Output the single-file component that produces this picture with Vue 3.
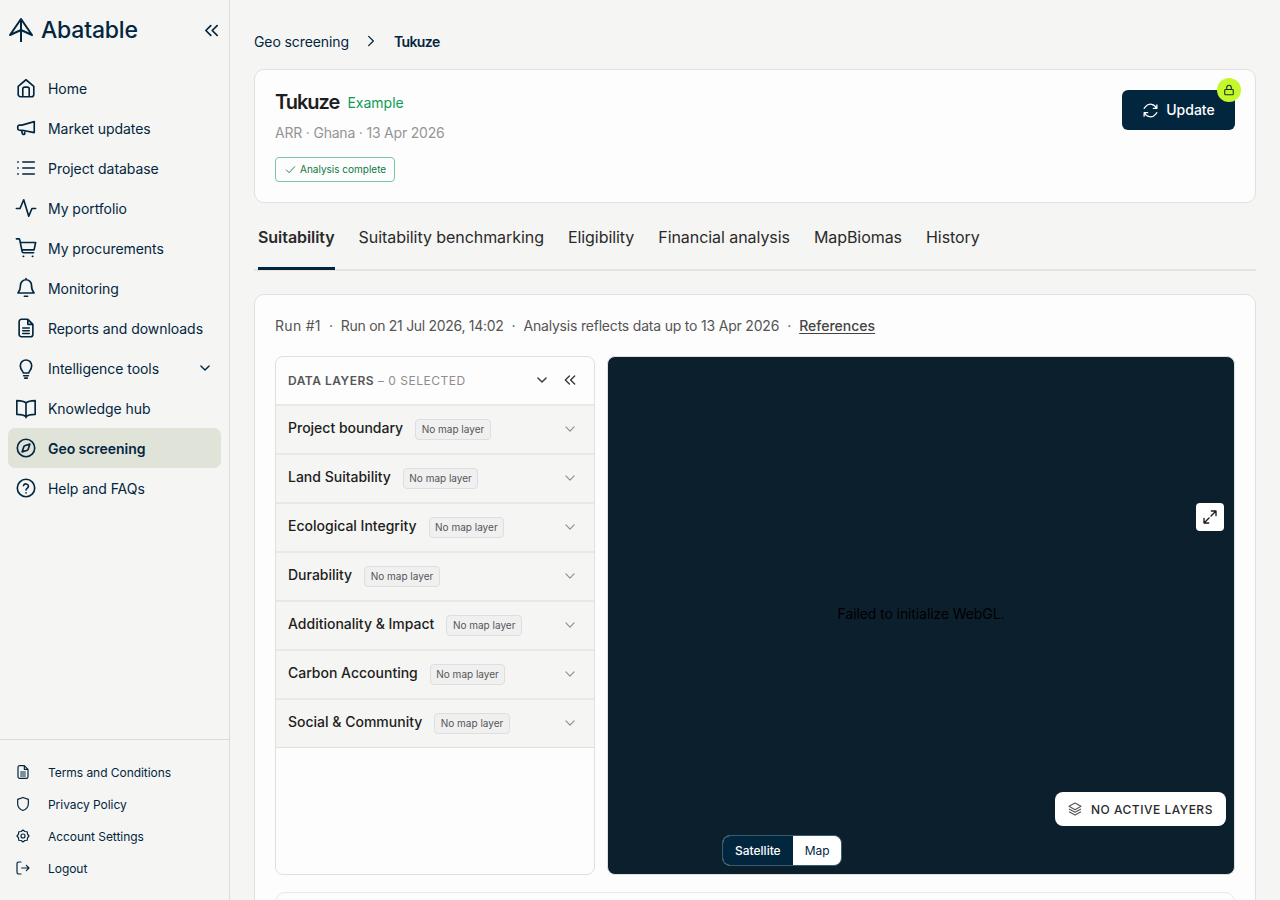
<script setup>
const navItems = [
  { label: 'Home', icon: 'home' },
  { label: 'Market updates', icon: 'megaphone' },
  { label: 'Project database', icon: 'list' },
  { label: 'My portfolio', icon: 'pulse' },
  { label: 'My procurements', icon: 'cart' },
  { label: 'Monitoring', icon: 'bell' },
  { label: 'Reports and downloads', icon: 'file' },
  { label: 'Intelligence tools', icon: 'bulb', caret: true },
  { label: 'Knowledge hub', icon: 'book' },
  { label: 'Geo screening', icon: 'compass', active: true },
  { label: 'Help and FAQs', icon: 'help' },
]

const footerItems = [
  { label: 'Terms and Conditions', icon: 'file' },
  { label: 'Privacy Policy', icon: 'shield' },
  { label: 'Account Settings', icon: 'gear' },
  { label: 'Logout', icon: 'logout' },
]

const icons = {
  home: 'M3.5 10.2 12 3l8.5 7.2V19a2.5 2.5 0 0 1-2.5 2.5H6A2.5 2.5 0 0 1 3.5 19ZM8.5 21.5V13a2 2 0 0 1 2-2h3a2 2 0 0 1 2 2v8.5',
  megaphone: 'M21 5v12L8 14.5H5a2 2 0 0 1-2-2v-1.6a2 2 0 0 1 2-2h2.5ZM7 14.5l1 3.5a1.4 1.4 0 0 0 2.7-.8l-.4-2',
  list: 'M8.5 5.5H21M8.5 12H21M8.5 18.5H21M3 5.5h.5M3 12h.5M3 18.5h.5',
  pulse: 'M1.5 12.5h4L9.5 3l5.5 18 3.5-8.5h4',
  cart: 'M1.5 2h2.6a1 1 0 0 1 1 .8L7.8 16a1.5 1.5 0 0 0 1.5 1.2h11M5.7 6h16.8l-1.7 8H7.3M9 21.2h.4M19 21.2h.4',
  bell: 'M6 9a6 6 0 0 1 12 0c0 5 1.5 7 2.8 8.5H3.2C4.5 16 6 14 6 9ZM10.2 21h3.6M12 3V1.8',
  file: 'M14 2.5H7A2.5 2.5 0 0 0 4.5 5v14A2.5 2.5 0 0 0 7 21.5h10a2.5 2.5 0 0 0 2.5-2.5V8ZM14 2.5V8h5.5M8.5 12h7M8.5 15h7M8.5 18h7',
  bulb: 'M9 17.5c0-2-3.2-3.5-3.2-8a6.2 6.2 0 0 1 12.4 0c0 4.5-3.2 6-3.2 8ZM9.5 20.5h5M10.5 23h3',
  book: 'M12 6.5C10 4.5 6.5 4 2 4v15c4.5 0 8 .5 10 2.5 2-2 5.5-2.5 10-2.5V4c-4.5 0-8 .5-10 2.5ZM12 6.5v16',
  compass: 'M12 2.5a9.5 9.5 0 1 0 0 19 9.5 9.5 0 0 0 0-19ZM16.2 7.8l-1.9 5.7a1.5 1.5 0 0 1-.9.9l-5.6 1.8 1.9-5.7a1.5 1.5 0 0 1 .9-.9Z',
  help: 'M12 2.5a9.5 9.5 0 1 0 0 19 9.5 9.5 0 0 0 0-19ZM9.3 9.3a2.8 2.8 0 0 1 5.400.9c0 1.900-2.700 2.400-2.700 4M12 17.300v.2',
  shield: 'M12 2.200 20 5v6.500c0 5-3.500 8.500-8 10.300-4.500-1.800-8-5.300-8-10.300V5Z',
  gear: 'M12 3l2.800 2.260 3.560.38.380 3.560L21 12l-2.260 2.800-.38 3.560-3.560.38L12 21l-2.800-2.260-3.560-.38-.38-3.560L3 12l2.260-2.800.38-3.560 3.560-.38ZM12 9a3 3 0 1 0 0 6 3 3 0 0 0 0-6Z',
  logout: 'M9 3H5.500A2.500 2.500 0 0 0 3 5.500v13A2.500 2.500 0 0 0 5.500 21H9M10 12h11M17 8l4 4-4 4',
}

const layers = [
  'Project boundary',
  'Land Suitability',
  'Ecological Integrity',
  'Durability',
  'Additionality & Impact',
  'Carbon Accounting',
  'Social & Community',
]

const tabs = ['Suitability', 'Suitability benchmarking', 'Eligibility', 'Financial analysis', 'MapBiomas', 'History']
</script>

<template>
  <div class="page">
    <aside class="sidebar">
      <div class="brand">
        <svg class="logo" viewBox="0 0 24 24" width="24" height="24" fill="none" stroke="currentColor" stroke-width="2" stroke-linejoin="round">
          <path d="M12 1 1 17l11-5 11 5ZM12 1v23" />
        </svg>
        <span class="brand-name">Abatable</span>
        <svg class="collapse" viewBox="0 0 24 24" width="17" height="17" fill="none" stroke="currentColor" stroke-width="2.400" stroke-linecap="round" stroke-linejoin="round">
          <path d="M11 5 4 12l7 7M20 5l-7 7 7 7" />
        </svg>
      </div>

      <nav class="nav">
        <a v-for="item in navItems" :key="item.label" class="nav-item" :class="{ active: item.active }">
          <svg class="nav-icon" viewBox="0 0 24 24" width="22" height="22" fill="none" stroke="currentColor" stroke-width="1.800" stroke-linecap="round" stroke-linejoin="round">
            <path :d="icons[item.icon]" />
          </svg>
          <span>{{ item.label }}</span>
          <svg v-if="item.caret" class="caret" viewBox="0 0 24 24" width="14" height="14" fill="none" stroke="currentColor" stroke-width="2.400" stroke-linecap="round" stroke-linejoin="round">
            <path d="m5 8.500 7 7 7-7" />
          </svg>
        </a>
      </nav>

      <div class="side-footer">
        <a v-for="item in footerItems" :key="item.label" class="foot-item">
          <svg viewBox="0 0 24 24" width="16" height="16" fill="none" stroke="currentColor" stroke-width="1.800" stroke-linecap="round" stroke-linejoin="round">
            <path :d="icons[item.icon]" />
          </svg>
          <span>{{ item.label }}</span>
        </a>
      </div>
    </aside>

    <main class="main">
      <div class="crumbs">
        <span>Geo screening</span>
        <svg viewBox="0 0 24 24" width="14" height="14" fill="none" stroke="currentColor" stroke-width="2.200" stroke-linecap="round" stroke-linejoin="round">
          <path d="m8 4 8 8-8 8" />
        </svg>
        <strong>Tukuze</strong>
      </div>

      <section class="card head-card">
        <div>
          <div class="title-row">
            <h1>Tukuze</h1>
            <span class="example">Example</span>
          </div>
          <div class="meta">ARR · Ghana · 13 Apr 2026</div>
          <div class="status">
            <svg viewBox="0 0 24 24" width="11" height="11" fill="none" stroke="currentColor" stroke-width="2" stroke-linecap="round" stroke-linejoin="round">
              <path d="m3 13 6 6L21 6" />
            </svg>
            Analysis complete
          </div>
        </div>
        <button class="update" type="button">
          <svg viewBox="0 0 24 24" width="17" height="17" fill="none" stroke="currentColor" stroke-width="1.800" stroke-linecap="round" stroke-linejoin="round">
            <path d="M21 4v5h-5M3 20v-5h5M20.500 9A9 9 0 0 0 5 6.500L3 9M3.500 15A9 9 0 0 0 19 17.500l2-2.500" />
          </svg>
          <span class="update-label">Update</span>
          <span class="lock">
            <svg viewBox="0 0 24 24" width="12" height="12" fill="none" stroke="#17321f" stroke-width="2.200" stroke-linecap="round" stroke-linejoin="round">
              <path d="M5 11h14a1.500 1.500 0 0 1 1.500 1.500V20a1.500 1.500 0 0 1-1.500 1.500H5A1.500 1.500 0 0 1 3.500 20v-7.500A1.500 1.500 0 0 1 5 11ZM7.500 11V7a4.500 4.500 0 0 1 9 0v4" />
            </svg>
          </span>
        </button>
      </section>

      <div class="tabs">
        <span v-for="(tab, i) in tabs" :key="tab" class="tab" :class="{ current: i === 0 }">{{ tab }}</span>
      </div>

      <section class="card body-card">
        <div class="run-line">
          <span class="run-id">Run #1</span><i>·</i>
          <span class="run-date">Run on 21 Jul 2026, 14:02</span><i>·</i>
          <span>Analysis reflects data up to 13 Apr 2026</span><i>·</i>
          <a>References</a>
        </div>

        <div class="workspace">
          <div class="layers">
            <div class="layers-head">
              <span class="layers-title"><b>DATA LAYERS</b> – 0 SELECTED</span>
              <svg class="head-icon" viewBox="0 0 24 24" width="14" height="14" fill="none" stroke="currentColor" stroke-width="2.400" stroke-linecap="round" stroke-linejoin="round">
                <path d="m5 8.500 7 7 7-7" />
              </svg>
              <svg class="head-icon" viewBox="0 0 24 24" width="14" height="14" fill="none" stroke="currentColor" stroke-width="2.400" stroke-linecap="round" stroke-linejoin="round">
                <path d="M11 5 4 12l7 7M20 5l-7 7 7 7" />
              </svg>
            </div>
            <div v-for="layer in layers" :key="layer" class="layer-row">
              <span class="layer-name">{{ layer }}</span>
              <span class="chip">No map layer</span>
              <svg class="row-caret" viewBox="0 0 24 24" width="14" height="14" fill="none" stroke="currentColor" stroke-width="2" stroke-linecap="round" stroke-linejoin="round">
                <path d="m5 8.500 7 7 7-7" />
              </svg>
            </div>
          </div>

          <div class="map">
            <span class="webgl">Failed to initialize WebGL.</span>
            <button class="expand" type="button">
              <svg viewBox="0 0 24 24" width="16" height="16" fill="none" stroke="#1d1d1d" stroke-width="2" stroke-linecap="round" stroke-linejoin="round">
                <path d="M14 3h7v7M21 3l-7.500 7.500M10 21H3v-7M3 21l7.500-7.500" />
              </svg>
            </button>
            <div class="active-layers">
              <svg viewBox="0 0 24 24" width="16" height="16" fill="none" stroke="#555" stroke-width="1.600" stroke-linejoin="round">
                <path d="m12 3 9 5-9 5-9-5ZM3 12l9 5 9-5M3 16l9 5 9-5" />
              </svg>
              NO ACTIVE LAYERS
            </div>
            <div class="switcher">
              <span class="on">Satellite</span>
              <span class="off">Map</span>
            </div>
          </div>
        </div>

        <div class="next-card"></div>
      </section>
    </main>
  </div>
</template>

<style>
html,
body {
  height: 100%;
  margin: 0;
  overflow: hidden;
}
</style>

<style scoped>
.page {
  display: flex;
  width: 1280px;
  height: 900px;
  overflow: hidden;
  background: #f5f5f3;
  color: #03263f;
  font-family: Inter, "Liberation Sans", sans-serif;
  font-size: 14px;
}

.sidebar {
  flex: 0 0 230px;
  box-sizing: border-box;
  display: flex;
  flex-direction: column;
  border-right: 1px solid #dcdcda;
}

.brand {
  display: flex;
  align-items: center;
  height: 60px;
  padding: 0 9px 0 9px;
}

.logo {
  width: 24px;
  height: 24px;
}

.brand-name {
  margin-left: 8px;
  padding-bottom: 1px;
  font-size: 23px;
  font-weight: 500;
  letter-spacing: -0.2px;
}

.collapse {
  margin-left: auto;
}

.nav {
  display: flex;
  flex-direction: column;
  padding: 8px 8px 0;
}

.nav-item {
  display: flex;
  align-items: center;
  height: 40px;
  padding: 0 7px;
  border-radius: 7px;
  letter-spacing: -0.05px;
}

.nav-icon {
  flex: none;
  margin-right: 11px;
}

.nav-item.active {
  background: #e0e3d8;
  font-weight: 600;
}

.caret {
  margin-left: auto;
  margin-right: 2px;
}

.side-footer {
  margin-top: auto;
  display: flex;
  flex-direction: column;
  padding: 16px 0 16px;
  border-top: 1px solid #dcdcda;
}

.foot-item {
  display: flex;
  align-items: center;
  gap: 17px;
  height: 32px;
  padding-left: 15px;
  font-size: 12px;
  letter-spacing: -0.05px;
}

.main {
  flex: 1;
  box-sizing: border-box;
  padding: 0 24px;
  min-width: 0;
}

.crumbs {
  display: flex;
  align-items: center;
  gap: 15px;
  height: 69px;
  padding: 14px 0 1px;
  box-sizing: border-box;
  font-size: 14px;
  letter-spacing: -0.1px;
}

.crumbs strong {
  margin-left: 1px;
  font-weight: 600;
  letter-spacing: -0.6px;
}

.card {
  background: #fdfdfd;
  border: 1px solid #e0e0de;
  border-radius: 10px;
}

.head-card {
  box-sizing: border-box;
  height: 134px;
  display: flex;
  justify-content: space-between;
  padding: 19px 20px;
}

.title-row {
  display: flex;
  align-items: center;
  gap: 8px;
  color: #1d1d1d;
}

h1 {
  margin: 0;
  font-size: 20px;
  line-height: 26px;
  font-weight: 600;
  letter-spacing: -1px;
}

.example {
  padding-top: 1px;
  color: #0a9c55;
  font-size: 14px;
}

.meta {
  margin-top: 8px;
  color: #959595;
  font-size: 14px;
  line-height: 20px;
  letter-spacing: -0.2px;
}

.status {
  display: inline-flex;
  align-items: center;
  gap: 4px;
  box-sizing: border-box;
  height: 25px;
  margin-top: 14px;
  padding: 0 8px 1px 9px;
  border: 1px solid #78c8a0;
  border-radius: 4px;
  color: #0a7a45;
  font-size: 10px;
}

.update {
  position: relative;
  display: flex;
  align-items: center;
  justify-content: center;
  gap: 7px;
  width: 113px;
  height: 40px;
  margin-top: 1px;
  border: 0;
  border-radius: 6px;
  background: #03263f;
  color: #fff;
  font: 500 14px Inter, "Liberation Sans", sans-serif;
}

.update-label {
  padding-bottom: 1px;
}

.lock {
  position: absolute;
  top: -12px;
  right: -6px;
  width: 24px;
  height: 24px;
  display: flex;
  align-items: center;
  justify-content: center;
  border-radius: 50%;
  background: #c5f82a;
}

.tabs {
  display: flex;
  gap: 24px;
  height: 68px;
  padding-left: 4px;
  box-sizing: border-box;
  border-bottom: 2px solid #e4e4e2;
  color: #2a2a2a;
  font-size: 16px;
  letter-spacing: -0.06px;
}

.tab {
  display: flex;
  align-items: center;
  height: 67px;
  box-sizing: border-box;
  padding-top: 1px;
}

.tab.current {
  font-weight: 600;
  padding-top: 4px;
  border-bottom: 3px solid #03263f;
}

.body-card {
  margin-top: 23px;
  padding: 20px;
  height: 700px;
  box-sizing: border-box;
}

.run-line {
  display: flex;
  align-items: center;
  height: 20px;
  color: #555;
  font-size: 14px;
  letter-spacing: -0.2px;
}

.run-id {
  letter-spacing: 0.3px;
}

.run-date {
  letter-spacing: -0.3px;
}

.run-line i {
  width: 20px;
  text-align: center;
  font-style: normal;
}

.run-line a {
  color: #444;
  font-weight: 500;
  letter-spacing: 0;
  text-decoration: underline;
  text-underline-offset: 2px;
}

.workspace {
  display: flex;
  gap: 12px;
  height: 519px;
  margin-top: 21px;
}

.layers {
  flex: 0 0 320px;
  box-sizing: border-box;
  border: 1px solid #e0e0de;
  border-radius: 8px;
  overflow: hidden;
}

.layers-head {
  display: flex;
  align-items: center;
  gap: 14px;
  height: 47px;
  box-sizing: border-box;
  padding: 0 17px 1px 12px;
}

.layers-title {
  flex: 1;
  color: #8e8e8e;
  font-size: 12px;
  letter-spacing: 0.5px;
}

.layers-title b {
  color: #555;
  font-weight: 600;
}

.head-icon {
  color: #3a3a3a;
}

.layer-row {
  display: flex;
  align-items: center;
  gap: 12px;
  height: 49px;
  box-sizing: border-box;
  padding: 0 17px 1px 12px;
  border-top: 2px solid #e8e8e6;
  background: #f5f5f3;
}

.layer-row:last-child {
  height: 50px;
  border-bottom: 1px solid #e0e0de;
}

.layer-name {
  margin-bottom: 3px;
  color: #1d1d1d;
  font-size: 14px;
  font-weight: 500;
}

.chip {
  box-sizing: border-box;
  height: 21px;
  padding: 0 5.5px;
  line-height: 18px;
  border: 1px solid #dedede;
  border-radius: 4px;
  background: #f0f0f0;
  color: #555;
  font-size: 10px;
}

.row-caret {
  margin-left: auto;
  color: #8e8e8e;
}

.map {
  position: relative;
  flex: 1;
  display: flex;
  align-items: center;
  justify-content: center;
  box-sizing: border-box;
  border: 1px solid #e0e0de;
  border-radius: 8px;
  background: #0c1f2d;
}

.webgl {
  padding-bottom: 4px;
  color: #000;
  font-size: 14px;
  letter-spacing: -0.1px;
}

.expand {
  position: absolute;
  top: 146px;
  right: 10px;
  width: 28px;
  height: 28px;
  display: flex;
  align-items: center;
  justify-content: center;
  padding: 0;
  border: 0;
  border-radius: 4px;
  background: #fff;
}

.active-layers {
  position: absolute;
  right: 8px;
  bottom: 48px;
  display: flex;
  align-items: center;
  gap: 8px;
  box-sizing: border-box;
  width: 171px;
  height: 34px;
  padding-left: 12px;
  border-radius: 8px;
  background: #fff;
  color: #2a2a2a;
  font-size: 12px;
  font-weight: 500;
  letter-spacing: 0.5px;
}

.switcher {
  position: absolute;
  left: 114px;
  bottom: 8px;
  display: flex;
  height: 31px;
  box-sizing: border-box;
  overflow: hidden;
  border: 1px solid #3a5a70;
  border-radius: 8px;
  background: #fff;
  font-size: 12px;
}

.switcher span {
  display: flex;
  align-items: center;
  padding-bottom: 1px;
}

.switcher .on {
  background: #03263f;
  color: #fff;
  font-weight: 500;
  padding-left: 12px;
  padding-right: 12px;
}

.switcher .off {
  padding-left: 12px;
  padding-right: 11px;
}

.next-card {
  height: 100px;
  margin-top: 17px;
  border: 1px solid #e8e8e6;
  border-radius: 10px;
}
</style>
